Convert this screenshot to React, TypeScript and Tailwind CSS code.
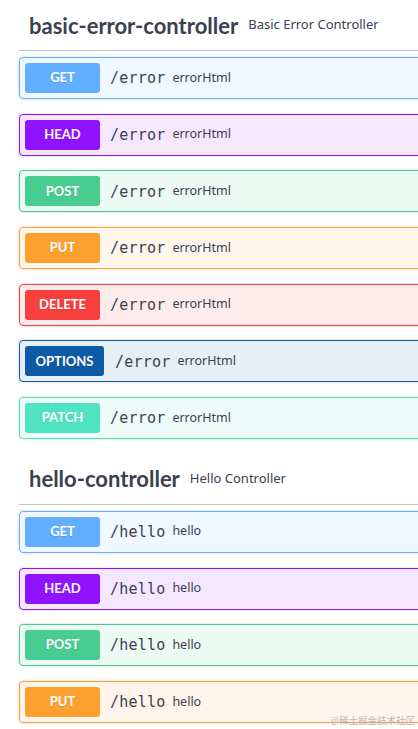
import React from 'react';

type Op = { method: string; color: string; bg: string; wide?: boolean };

const ops: Op[] = [
  { method: 'GET', color: '#61affe', bg: 'rgba(97,175,254,0.1)' },
  { method: 'HEAD', color: '#9012fe', bg: 'rgba(144,18,254,0.1)' },
  { method: 'POST', color: '#49cc90', bg: 'rgba(73,204,144,0.1)' },
  { method: 'PUT', color: '#fca130', bg: 'rgba(252,161,48,0.1)' },
  { method: 'DELETE', color: '#f93e3e', bg: 'rgba(249,62,62,0.1)' },
  { method: 'OPTIONS', color: '#0d5aa7', bg: 'rgba(13,90,167,0.1)', wide: true },
  { method: 'PATCH', color: '#50e3c2', bg: 'rgba(80,227,194,0.1)' },
];

const Row: React.FC<{ op: Op; path: string; summary: string }> = ({ op, path, summary }) => (
  <div
    className="flex items-center h-[42px] mb-[14.7px] -mr-[20px] border rounded-[4px] px-[5px] shadow-[0_0_3px_rgba(0,0,0,0.19)]"
    style={{ borderColor: op.color, backgroundColor: op.bg }}
  >
    <div
      className={`${op.wide ? 'w-[79px] mr-[11px]' : 'w-[75px] mr-[10px]'} h-[30px] rounded-[3px] flex items-center justify-center text-white font-bold text-[13px] [text-shadow:0_1px_0_rgba(0,0,0,0.1)]`}
      style={{ backgroundColor: op.color }}
    >
      {op.method}
    </div>
    <span className="font-['DejaVu_Sans_Mono',monospace] text-[15px] text-[#3b4151] tracking-[0.2px] pt-[1px]">{path}</span>
    <span className="ml-[7px] text-[12.5px] text-[#3b4151] font-['Noto_Sans',sans-serif]">{summary}</span>
  </div>
);

const Section: React.FC<{ name: string; desc: string; path: string; summary: string; count: number; className?: string }> = ({
  name,
  desc,
  path,
  summary,
  count,
  className,
}) => (
  <div className={className}>
    <div className="h-[51px] flex items-center pl-[10px] border-b border-[rgba(59,65,81,0.3)] mb-[6px]">
      <h3 className="text-[22px] font-bold text-[#3b4151]">{name}</h3>
      <span className="ml-[10px] text-[13px] text-[#3b4151] font-['Noto_Sans',sans-serif]">{desc}</span>
    </div>
    {ops.slice(0, count).map((op) => (
      <Row key={op.method} op={op} path={path} summary={summary} />
    ))}
  </div>
);

export default function App() {
  return (
    <div className="relative h-[729px] overflow-hidden bg-white font-['Lato',sans-serif]">
      <div className="pl-[19px]">
        <Section name="basic-error-controller" desc="Basic Error Controller" path="/error" summary="errorHtml" count={7} />
        <Section
          className="mt-[2px]"
          name="hello-controller"
          desc="Hello Controller"
          path="/hello"
          summary="hello"
          count={4}
        />
      </div>
      <span className="absolute right-[3px] bottom-[1px] text-[9.5px] text-[#b8b8b8] font-['Noto_Sans','Noto_Sans_CJK_SC',sans-serif]">
        @稀土掘金技术社区
      </span>
    </div>
  );
}
